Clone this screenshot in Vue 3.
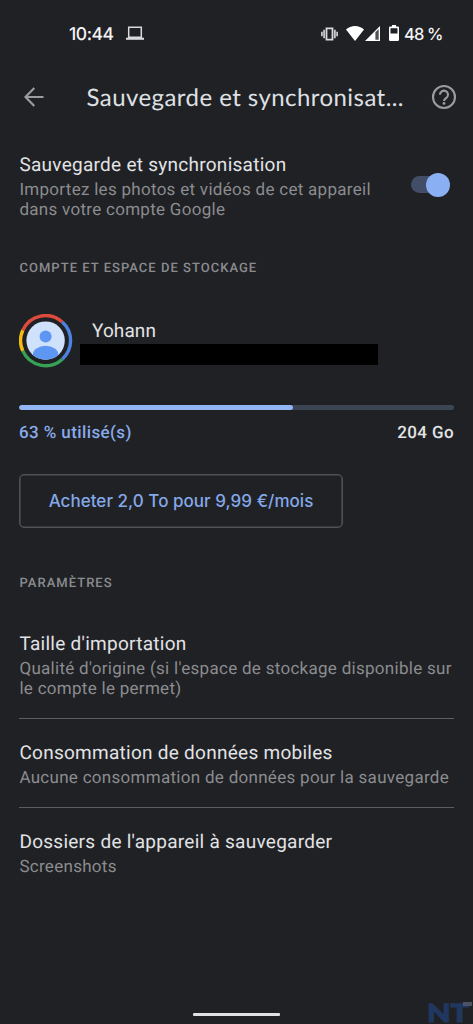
<script setup>
import { ref } from 'vue'

const backup = ref(true)
const used = ref(63)
const settings = [
  { title: "Taille d'importation", lines: ["Qualité d'origine (si l'espace de stockage disponible sur", 'le compte le permet)'] },
  { title: 'Consommation de données mobiles', lines: ['Aucune consommation de données pour la sauvegarde'] },
  { title: "Dossiers de l'appareil à sauvegarder", lines: ['Screenshots'] },
]
</script>

<template>
  <main class="screen">
    <div class="status">
      <span class="clock">10:44</span>
      <svg class="laptop" width="18" height="15" viewBox="0 0 18 15">
        <path d="M2.7 1.2h12.6v10H2.7z" fill="none" stroke="#d8dade" stroke-width="1.5" />
        <path d="M0 11.7h18v2.1H0z" fill="#d8dade" />
      </svg>
      <span class="grow"></span>
      <svg class="vibrate" width="17" height="14" viewBox="0 0 17 14">
        <path d="M5.5 1.3h6v11.4h-6z" fill="none" stroke="#d8dade" stroke-width="1.8" />
        <path d="M3.1 2.8v8.4M13.9 2.8v8.4M.9 4.8v4.4M16.1 4.8v4.4" fill="none" stroke="#d8dade" stroke-width="1.6" />
      </svg>
      <svg class="wifi" width="18" height="15" viewBox="0 0 18 15">
        <path d="M0 3.5Q3.8 0 9 0t9 3.500L9 15z" fill="#fff" />
      </svg>
      <svg class="signal" width="15" height="15" viewBox="0 0 15 15">
        <path d="M0 15 15 0v15z" fill="#fff" />
        <path d="M10.4 6.3 13.7 3v10.700h-3.300z" fill="#505154" />
      </svg>
      <svg class="battery" width="10" height="16" viewBox="0 0 10 16">
        <path d="M3 0h4v1.6h1.8q1.2 0 1.2 1.2v12q0 1.2-1.2 1.2H1.2Q0 16 0 14.8v-12q0-1.2 1.2-1.2H3z" fill="#fff" />
        <path d="M1.5 3.2h7v5.3h-7z" fill="#202124" />
      </svg>
      <span class="percent">48 %</span>
    </div>

    <header class="bar">
      <svg class="back" width="20" height="20" viewBox="0 0 20 20">
        <path d="M19.500 10H1.800M10.300 1 1.500 10l8.800 9" fill="none" stroke="#9b9c9f" stroke-width="2.200" />
      </svg>
      <h1>Sauvegarde et synchronisat...</h1>
      <svg class="help" width="26" height="26" viewBox="0 0 26 26">
        <circle cx="13" cy="13" r="11" fill="none" stroke="#9b9c9f" stroke-width="2.100" />
        <path d="M9 10.700a4 4 0 1 1 6.700 2.900C14 15 13 15.300 13 17" fill="none" stroke="#9b9c9f" stroke-width="2.100" />
        <circle cx="13" cy="19.400" r="1.400" fill="#9b9c9f" />
      </svg>
    </header>

    <section class="sync">
      <div>
        <h2>Sauvegarde et synchronisation</h2>
        <p>Importez les photos et vidéos de cet appareil<br />dans votre compte Google</p>
      </div>
      <button class="switch" :class="{ on: backup }" @click="backup = !backup"><i></i></button>
    </section>

    <h3 class="label">COMPTE ET ESPACE DE STOCKAGE</h3>

    <section class="account">
      <svg class="avatar" width="54" height="54" viewBox="0 0 54 54">
        <defs><clipPath id="face"><circle cx="26.600" cy="26.600" r="19.200" /></clipPath></defs>
        <g fill="none" stroke-width="3.400" transform="translate(-.4 -.4)">
          <path d="M4.200 16.700A25 25 0 0 1 43.700 8.400" stroke="#dd4b3e" />
          <path d="M43.700 8.400A25 25 0 0 1 43.700 45.600" stroke="#4c83e0" />
          <path d="M43.700 45.600A25 25 0 0 1 4.200 37.300" stroke="#37a156" />
          <path d="M4.200 37.300A25 25 0 0 1 4.200 16.700" stroke="#f6bb10" />
        </g>
        <circle cx="26.600" cy="26.600" r="19.200" fill="#d0e1fc" />
        <g clip-path="url(#face)" fill="#5d97f3">
          <circle cx="26.600" cy="22.400" r="6" />
          <ellipse cx="26.600" cy="40.600" rx="12.800" ry="8.800" />
        </g>
      </svg>
      <div class="who">
        <span class="name">Yohann</span>
        <div class="redacted"></div>
      </div>
    </section>

    <div class="meter"><div class="fill" :style="{ width: used + '%' }"></div></div>
    <div class="usage">
      <span class="pct">{{ used }} % utilisé(s)</span>
      <span class="total">204 Go</span>
    </div>

    <button class="buy"><span>Acheter 2,0 To pour 9,99 €/mois</span></button>

    <h3 class="label params">PARAMÈTRES</h3>

    <section class="list">
      <article v-for="s in settings" :key="s.title">
        <h2>{{ s.title }}</h2>
        <p><template v-for="(l, i) in s.lines" :key="i"><br v-if="i" />{{ l }}</template></p>
      </article>
    </section>

    <footer>
      <div class="handle"></div>
      <svg class="mark" width="47" height="25" viewBox="0 0 47 25">
        <text x="1" y="23" textLength="42" lengthAdjust="spacingAndGlyphs">NT</text>
        <path d="M37 3h9v4h-9z" fill="#4b5266" />
      </svg>
    </footer>
  </main>
</template>

<style>
body { margin: 0; background: #202124; }
</style>

<style scoped>
.screen {
  box-sizing: border-box;
  width: 473px;
  height: 1024px;
  padding: 0 19px;
  display: flex;
  flex-direction: column;
  overflow: hidden;
  position: relative;
  background: #202124;
  color: #e2e3e6;
  font-family: Roboto, "Liberation Sans", sans-serif;
  text-rendering: geometricPrecision;
}
h1, h2, h3, p { margin: 0; font-weight: 400; white-space: nowrap; }
svg { display: block; flex: none; }
button { padding: 0; background: none; border: 0; font: inherit; }
.status { height: 68px; display: flex; align-items: center; padding-left: 50px; padding-right: 13px; white-space: nowrap; }
.clock, .percent { font: 500 17.5px/20px Inter, sans-serif; color: #f4f4f6; }
.clock { letter-spacing: -.45px; width: 57px; padding-top: 2px; }
.laptop { margin-top: -2px; }
.grow { flex: 1; }
.vibrate { margin-top: -1px; margin-right: -1px; }
.wifi { margin-left: 9px; margin-top: -2px; }
.signal { margin-left: 1px; margin-top: -1px; }
.battery { margin-left: 9px; margin-top: -2px; }
.percent { margin-left: 5px; width: 37px; font-size: 16.5px; letter-spacing: -.9px; }
.bar { height: 58px; display: flex; align-items: center; margin-right: -3px; }
.back { margin-left: 5px; }
h1 { flex: 1; margin-left: 42.5px; padding-top: 2px; font: 400 24px/30px Lato, sans-serif; color: #dfe0e3; letter-spacing: .44px; }
.sync { height: 68px; margin-top: 26px; display: flex; justify-content: space-between; }
h2 { padding-left: .4px; font-size: 19px; line-height: 25px; letter-spacing: .27px; }
p { padding-left: .4px; margin-top: 3px; font-size: 17px; line-height: 20px; letter-spacing: .29px; color: #8b8c90; }
.switch { width: 39px; height: 24px; margin: 20.5px 4px 0 0; display: flex; align-items: center; position: relative; }
.switch::before { content: ""; position: absolute; left: 0; top: 3.5px; width: 33px; height: 17px; border-radius: 9px; background: #424d68; }
.switch i { position: relative; width: 24px; height: 24px; border-radius: 50%; background: #8ab0f3; }
.switch.on i { margin-left: auto; }
.label { margin-top: 41px; height: 16px; padding-left: .5px; font-size: 13px; line-height: 16px; font-weight: 500; letter-spacing: 1.02px; color: #8b8c90; }
.account { display: flex; height: 54px; margin-top: 37px; }
.who { margin-left: 7px; }
.name { display: block; padding-left: 12px; font-size: 19px; line-height: 25px; margin-top: 4px; margin-bottom: 1px; letter-spacing: .1px; }
.redacted { width: 298px; height: 21px; background: #000; }
.meter { flex: none; margin-top: 37.4px; height: 5px; border-radius: 3px; background: #3b4554; overflow: hidden; }
.fill { height: 5px; border-radius: 3px; background: #92b5f4; }
.usage { display: flex; justify-content: space-between; margin-top: 12.6px; font-size: 17px; line-height: 20px; font-weight: 500; letter-spacing: .4px; }
.pct { color: #89abea; }
.buy { box-sizing: border-box; flex: none; width: 324px; height: 54px; margin-top: 31px; border: 1px solid #505154; box-shadow: inset 0 0 0 .6px #505154; border-radius: 5px; font: 500 17px/20px Inter, sans-serif; letter-spacing: .03px; color: #84a8e8; white-space: nowrap; }
.params { margin-top: 48px; }
.list { margin-top: 39px; }
article { padding-bottom: 19px; border-bottom: 1px solid #5c5d61; margin-bottom: 21px; }
article:last-child { border: 0; }
footer { position: absolute; left: 0; right: 0; bottom: 0; height: 25px; }
.handle { width: 87px; height: 3px; margin: 14px auto 0; border-radius: 1px; background: #e2e2e4; }
.mark { position: absolute; right: 0; bottom: 0; }
.mark text { font: 900 25px Lato, sans-serif; fill: #20375f; stroke: #20375f; stroke-width: 1px; }
</style>
